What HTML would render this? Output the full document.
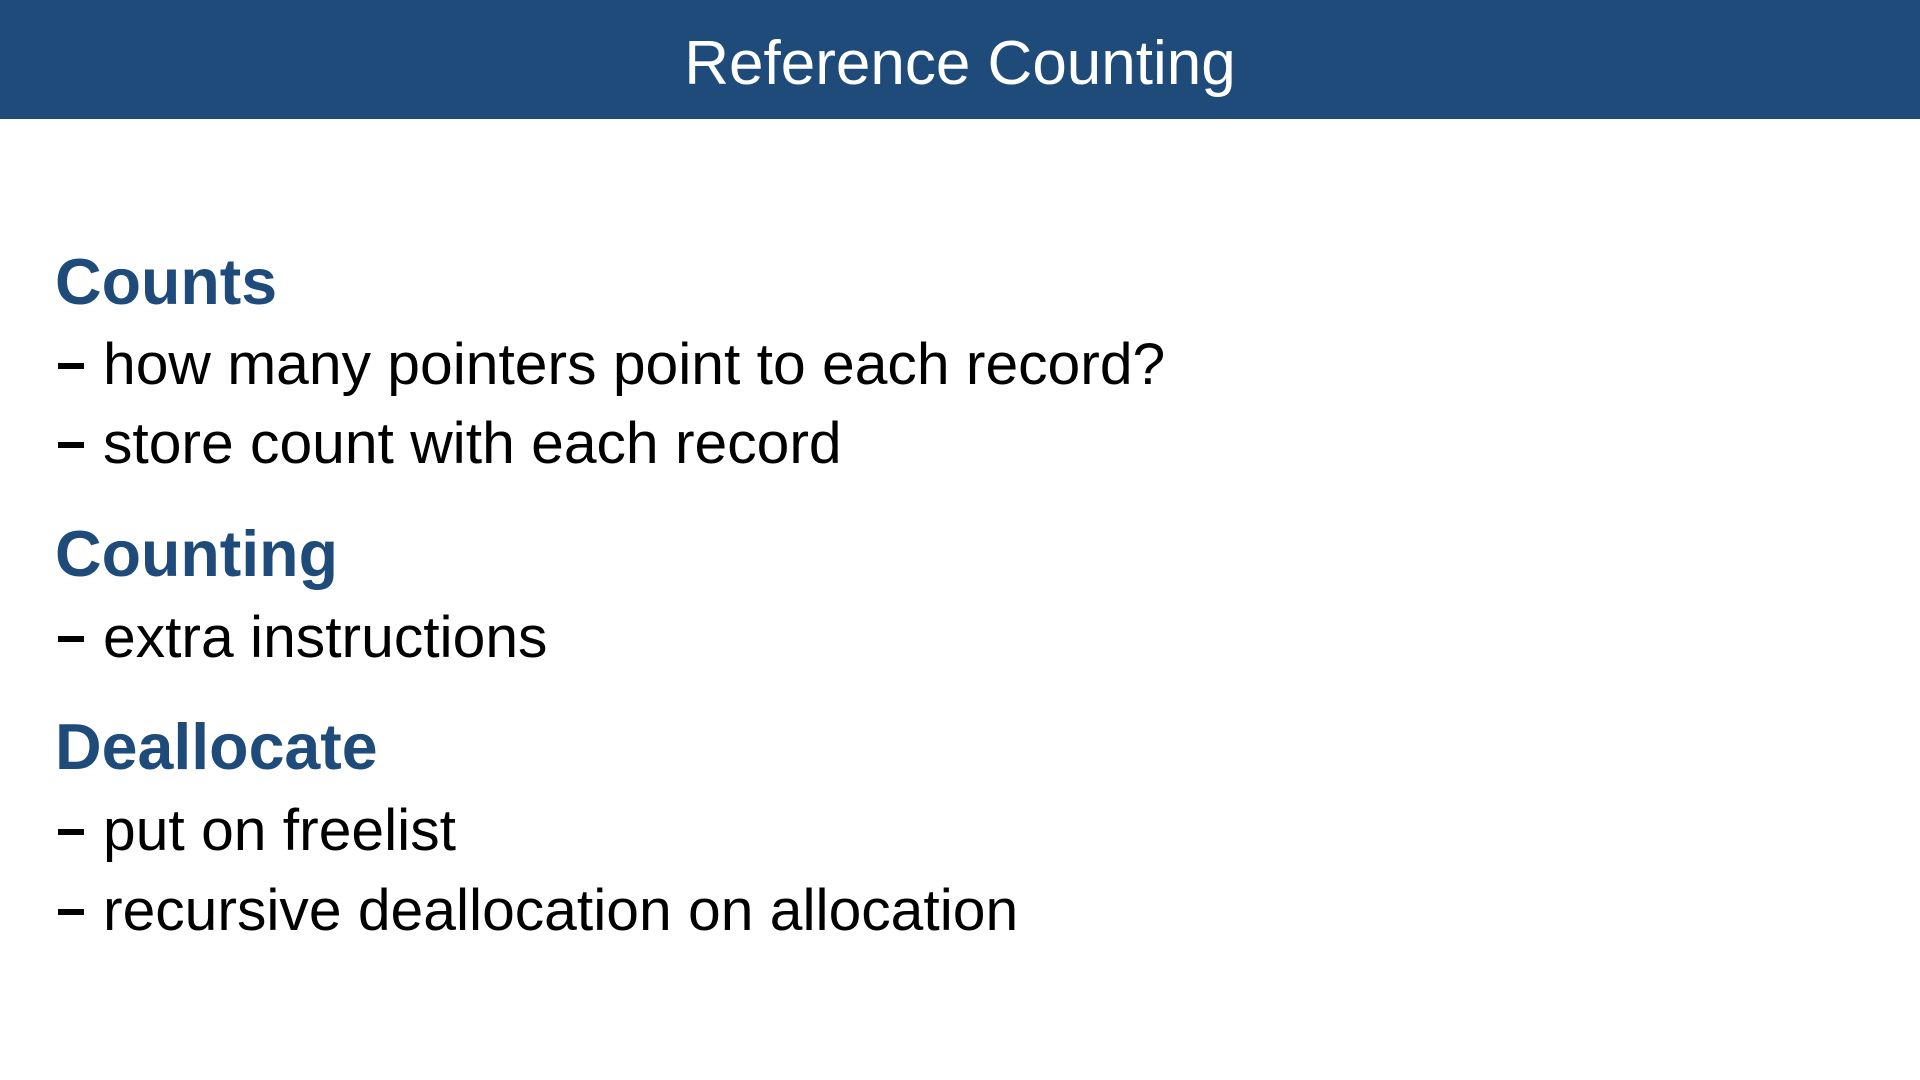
<!DOCTYPE html>
<html><head><meta charset="utf-8"><style>
html,body{margin:0;padding:0;width:1920px;height:1080px;background:#fff;overflow:hidden;font-family:"Liberation Sans",Arial,sans-serif}
.hdr{position:absolute;left:0;top:0;width:1920px;height:119px;background:#1f4b7b}
.title{position:absolute;left:0;width:1920px;text-align:center;color:#fff;font-size:62px;line-height:62px;top:33px}
.t{position:absolute;left:55px;line-height:1;white-space:nowrap}
.h{color:#1f4b7b;font-weight:bold;font-size:64.5px}
.b{color:#000;font-size:58.8px}
.d{display:inline-block;width:26px;height:6px;background:#000;vertical-align:middle;margin:0 19px 0 3px;position:relative;top:-2px}
</style></head><body>
<div class="hdr"></div>
<div class="title">Reference Counting</div>
<div class="t h" style="top:250px">Counts</div>
<div class="t b" style="top:336px"><span class="d"></span>how many pointers point to each record?</div>
<div class="t b" style="top:415px"><span class="d"></span>store count with each record</div>
<div class="t h" style="top:522px">Counting</div>
<div class="t b" style="top:609px"><span class="d"></span>extra instructions</div>
<div class="t h" style="top:715px">Deallocate</div>
<div class="t b" style="top:802px"><span class="d"></span>put on freelist</div>
<div class="t b" style="top:882px"><span class="d"></span>recursive deallocation on allocation</div>
</body></html>
